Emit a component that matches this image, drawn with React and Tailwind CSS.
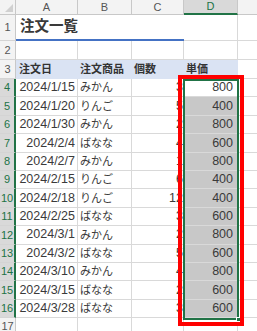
import React from 'react';

const orders = [
  { date: '2024/1/15', item: 'みかん', qty: 3, price: 800 },
  { date: '2024/1/20', item: 'りんご', qty: 5, price: 400 },
  { date: '2024/1/30', item: 'みかん', qty: 2, price: 800 },
  { date: '2024/2/4', item: 'ばなな', qty: 4, price: 600 },
  { date: '2024/2/7', item: 'みかん', qty: 1, price: 800 },
  { date: '2024/2/15', item: 'りんご', qty: 6, price: 400 },
  { date: '2024/2/18', item: 'りんご', qty: 12, price: 400 },
  { date: '2024/2/25', item: 'ばなな', qty: 3, price: 600 },
  { date: '2024/3/1', item: 'みかん', qty: 2, price: 800 },
  { date: '2024/3/2', item: 'ばなな', qty: 5, price: 600 },
  { date: '2024/3/10', item: 'みかん', qty: 4, price: 800 },
  { date: '2024/3/15', item: 'ばなな', qty: 2, price: 600 },
  { date: '2024/3/28', item: 'ばなな', qty: 3, price: 600 },
];

const font = { fontFamily: '"Liberation Sans", "Noto Sans CJK JP", sans-serif' };

function RowHead({ n, active, className = '' }) {
  return (
    <div
      className={`w-[16px] shrink-0 flex items-center justify-center text-[11px] border-b border-[#d4d4d4] ${
        active
          ? 'bg-[#d9d9d9] text-[#217346] border-r-2 border-r-[#217346]'
          : 'bg-[#f3f3f3] text-[#555] border-r border-r-[#c8c8c8]'
      } ${className}`}
    >
      {n}
    </div>
  );
}

function Cell({ w, className = '', children }) {
  return (
    <div className={`${w} shrink-0 border-r border-b border-[#d9d9d9] flex items-center pl-[2px] overflow-hidden whitespace-nowrap ${className}`}>
      {children}
    </div>
  );
}

export default function App() {
  return (
    <div className="w-[257px] h-[331px] overflow-hidden bg-white text-[#333] relative" style={font}>
      {/* column headers */}
      <div className="flex h-[15px]">
        <div className="w-[16px] shrink-0 bg-[#f3f3f3] border-r border-b border-[#c8c8c8] relative">
          <div className="absolute right-[2px] bottom-[2px] w-0 h-0 border-l-[8px] border-l-transparent border-b-[8px] border-b-[#d0d0d0]" />
        </div>
        {['A', 'B', 'C'].map((c, i) => (
          <div
            key={c}
            className={`${['w-[62px]', 'w-[54px]', 'w-[52px]'][i]} shrink-0 bg-[#f3f3f3] border-r border-b border-[#c8c8c8] text-[11px] text-[#555] flex items-center justify-center`}
          >
            {c}
          </div>
        ))}
        <div className="w-[54px] shrink-0 bg-[#d9d9d9] border-r border-[#c8c8c8] border-b-2 border-b-[#217346] text-[11px] text-[#217346] flex items-center justify-center">
          D
        </div>
        <div className="flex-1 bg-[#f3f3f3] border-b border-[#c8c8c8]" />
      </div>

      {/* row 1: title */}
      <div className="flex h-[26px]">
        <RowHead n="1" />
        <div className="w-[168px] shrink-0 border-b-2 border-[#4472c4] flex items-center px-[4px]">
          <span className="text-[14.5px] font-bold text-[#3a3a3a]">注文一覧</span>
        </div>
        <Cell w="w-[54px]" />
        <div className="flex-1 border-b border-[#d9d9d9]" />
      </div>

      {/* row 2 */}
      <div className="flex h-[19px]">
        <RowHead n="2" />
        <Cell w="w-[62px]" />
        <Cell w="w-[54px]" />
        <Cell w="w-[52px]" />
        <Cell w="w-[54px]" />
        <div className="flex-1 border-b border-[#d9d9d9]" />
      </div>

      {/* row 3: table header */}
      <div className="flex h-[19px]">
        <RowHead n="3" />
        <div className="w-[222px] shrink-0 bg-[#dae3f3] flex items-center text-[11px] font-bold text-[#333]">
          <span className="w-[62px] pl-[3px]">注文日</span>
          <span className="w-[54px] pl-[2px]">注文商品</span>
          <span className="w-[52px] pl-[2px]">個数</span>
          <span className="w-[54px] pl-[2px]">単価</span>
        </div>
        <div className="flex-1 border-b border-[#d9d9d9]" />
      </div>

      {/* data rows */}
      {orders.map((o, i) => (
        <div key={i} className="flex h-[18.4px]">
          <RowHead n={i + 4} active />
          <Cell w="w-[62px]" className="justify-end pr-[2px] text-[12.5px] text-[#3a3a3a]">{o.date}</Cell>
          <Cell w="w-[54px]" className="text-[11px] text-[#3a3a3a]">{o.item}</Cell>
          <Cell w="w-[52px]" className="justify-end text-[12.5px] text-[#3a3a3a]">{o.qty}</Cell>
          <Cell
            w="w-[54px]"
            className={`justify-end text-[12.5px] text-[#3a3a3a] pr-[4px] ${i === 0 ? 'bg-white' : 'bg-[#c8c8c8]'}`}
          >
            {o.price}
          </Cell>
          <div className="flex-1 border-b border-[#d9d9d9]" />
        </div>
      ))}

      {/* row 17 */}
      <div className="flex h-[18px]">
        <RowHead n="17" />
        <Cell w="w-[62px]" />
        <Cell w="w-[54px]" />
        <Cell w="w-[52px]" />
        <Cell w="w-[54px]" />
        <div className="flex-1" />
      </div>

      {/* selection range D4:D16 */}
      <div className="absolute left-[183px] top-[79px] w-[56px] h-[241px] border-2 border-[#217346] pointer-events-none">
        <div className="absolute -right-[4px] -bottom-[4px] w-[5px] h-[5px] bg-[#217346] border border-white" />
      </div>

      {/* red highlight frame */}
      <div className="absolute left-[178px] top-[75px] w-[66px] h-[251px] border-[4px] border-[#ff0000] pointer-events-none" />
    </div>
  );
}
